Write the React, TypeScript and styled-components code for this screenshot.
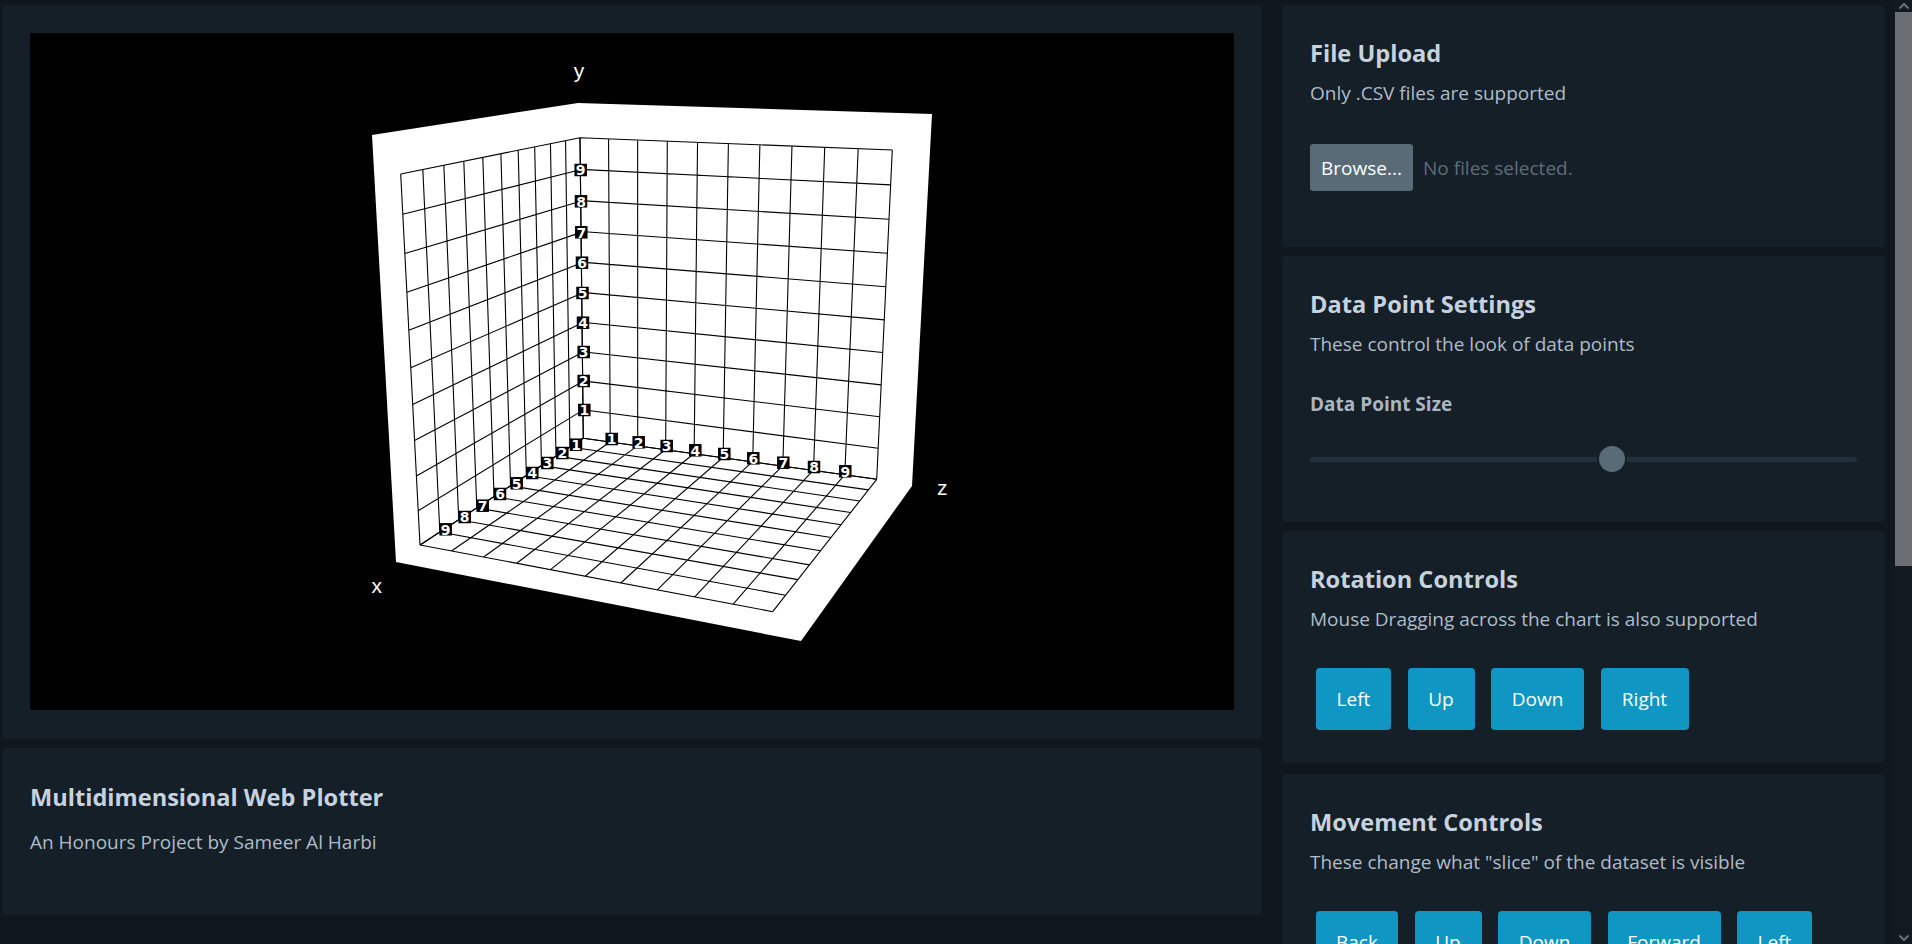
import React from 'react';
import styled, { createGlobalStyle } from 'styled-components';

type Pt = [number, number];

const GlobalStyle = createGlobalStyle`
  html, body {
    margin: 0;
    padding: 0;
    height: 100%;
    overflow: hidden;
    background: #10171d;
  }
`;

// maps the unit square on to a quad, so the grid keeps its perspective
const homography = (a: Pt, b: Pt, c: Pt, d: Pt) => {
  const dx1 = b[0] - c[0];
  const dx2 = d[0] - c[0];
  const sx = a[0] - b[0] + c[0] - d[0];
  const dy1 = b[1] - c[1];
  const dy2 = d[1] - c[1];
  const sy = a[1] - b[1] + c[1] - d[1];
  const det = dx1 * dy2 - dx2 * dy1;
  const g = (sx * dy2 - dx2 * sy) / det;
  const h = (dx1 * sy - sx * dy1) / det;
  return (u: number, v: number): Pt => {
    const w = g * u + h * v + 1;
    return [
      ((b[0] - a[0] + g * b[0]) * u + (d[0] - a[0] + h * d[0]) * v + a[0]) / w,
      ((b[1] - a[1] + g * b[1]) * u + (d[1] - a[1] + h * d[1]) * v + a[1]) / w,
    ];
  };
};

const gridPath = (a: Pt, b: Pt, c: Pt, d: Pt) => {
  const map = homography(a, b, c, d);
  let path = '';
  for (let i = 0; i <= 10; i++) {
    const [x1, y1] = map(i / 10, 0);
    const [x2, y2] = map(i / 10, 1);
    const [x3, y3] = map(0, i / 10);
    const [x4, y4] = map(1, i / 10);
    path += `M${x1} ${y1}L${x2} ${y2}M${x3} ${y3}L${x4} ${y4}`;
  }
  return path;
};

// chart coordinates are page coordinates minus the canvas origin (30, 33)
const at = (x: number, y: number): Pt => [x - 30, y - 33];

const corner = at(580, 137.7);
const floorBack = at(583.3, 438.3);
const leftTop = at(400.7, 174);
const leftBottom = at(420, 545);
const rightTop = at(892.3, 150);
const rightBottom = at(876.7, 479.3);
const floorFront = at(772.7, 611.7);

const WALLS = [
  gridPath(leftTop, corner, floorBack, leftBottom),
  gridPath(corner, rightTop, rightBottom, floorBack),
  gridPath(floorBack, rightBottom, floorFront, leftBottom),
];

const OUTLINE = [at(372, 135), at(578, 103), at(932, 114), at(912, 486), at(801, 641), at(396, 562)]
  .map((p) => p.join(','))
  .join(' ');

type Tick = { n: number; x: number; y: number };

const TICKS: Tick[] = [
  { n: 9, x: 580.7, y: 170 },
  { n: 8, x: 581, y: 201.3 },
  { n: 7, x: 581.3, y: 232.3 },
  { n: 6, x: 582, y: 262.7 },
  { n: 5, x: 582.5, y: 293 },
  { n: 4, x: 583, y: 322.7 },
  { n: 3, x: 583.7, y: 352 },
  { n: 2, x: 583.7, y: 381 },
  { n: 1, x: 584.3, y: 410 },
  { n: 1, x: 611.7, y: 439 },
  { n: 2, x: 638.7, y: 442.3 },
  { n: 3, x: 666.7, y: 446 },
  { n: 4, x: 695.3, y: 450.3 },
  { n: 5, x: 724.3, y: 454 },
  { n: 6, x: 753.3, y: 458.3 },
  { n: 7, x: 783.3, y: 462.7 },
  { n: 8, x: 814, y: 467 },
  { n: 9, x: 845.3, y: 471.3 },
  { n: 1, x: 576, y: 444.7 },
  { n: 2, x: 562.3, y: 453 },
  { n: 3, x: 547.3, y: 463 },
  { n: 4, x: 532.3, y: 473 },
  { n: 5, x: 516.7, y: 483.3 },
  { n: 6, x: 500, y: 494 },
  { n: 7, x: 482.7, y: 505.7 },
  { n: 8, x: 464.7, y: 517 },
  { n: 9, x: 445.7, y: 529.3 },
];

const AXES = [
  { name: 'y', x: 579, y: 72 },
  { name: 'z', x: 942.3, y: 489 },
  { name: 'x', x: 376.7, y: 587.3 },
];

const Chart = () => (
  <ChartSvg viewBox="0 0 1204 677">
    <polygon points={OUTLINE} fill="#fff" />
    {WALLS.map((d, i) => (
      <path key={i} d={d} fill="none" stroke="#000" strokeWidth="1.1" />
    ))}
    {TICKS.map((t, i) => {
      const [x, y] = at(t.x, t.y);
      return (
        <g key={i}>
          <rect x={x - 6.25} y={y - 6.25} width="12.5" height="12.5" fill="#000" />
          <TickText x={x} y={y + 5.2}>
            {t.n}
          </TickText>
        </g>
      );
    })}
    {AXES.map((a) => {
      const [x, y] = at(a.x, a.y);
      return (
        <AxisText key={a.name} x={x} y={y + 5.5}>
          {a.name}
        </AxisText>
      );
    })}
  </ChartSvg>
);

// the labels run narrower in the screenshot's font, so the widths are fixed per button
const ROTATION = [
  { label: 'Left', width: 75 },
  { label: 'Up', width: 67 },
  { label: 'Down', width: 93 },
  { label: 'Right', width: 88 },
];

const MOVEMENT = [
  { label: 'Back', width: 82 },
  { label: 'Up', width: 67 },
  { label: 'Down', width: 93 },
  { label: 'Forward', width: 113 },
  { label: 'Left', width: 75 },
  { label: 'Right', width: 88 },
];

const App = () => (
  <>
    <GlobalStyle />
    <S.Page>
      <S.Columns>
        <S.LeftColumn>
          <S.ChartCard>
            <S.Canvas>
              <Chart />
            </S.Canvas>
          </S.ChartCard>
          <S.TitleCard>
            <S.Title>Multidimensional Web Plotter</S.Title>
            <S.TitleSub>An Honours Project by Sameer Al Harbi</S.TitleSub>
          </S.TitleCard>
        </S.LeftColumn>
        <S.RightColumn>
          <S.Card $height={242}>
            <S.Heading>File Upload</S.Heading>
            <S.Sub>Only .CSV files are supported</S.Sub>
            <S.FileRow>
              <S.Browse>Browse...</S.Browse>
              <S.FileName>No files selected.</S.FileName>
            </S.FileRow>
          </S.Card>
          <S.Card $height={266}>
            <S.Heading>Data Point Settings</S.Heading>
            <S.Sub>These control the look of data points</S.Sub>
            <S.Label>Data Point Size</S.Label>
            <S.Track>
              <S.Thumb />
            </S.Track>
          </S.Card>
          <S.Card $height={232} $gap={11}>
            <S.Heading>Rotation Controls</S.Heading>
            <S.Sub>Mouse Dragging across the chart is also supported</S.Sub>
            <S.Buttons>
              {ROTATION.map((b) => (
                <S.Button key={b.label} $width={b.width}>
                  {b.label}
                </S.Button>
              ))}
            </S.Buttons>
          </S.Card>
          <S.Card $height={310}>
            <S.Heading>Movement Controls</S.Heading>
            <S.Sub>These change what "slice" of the dataset is visible</S.Sub>
            <S.Buttons>
              {MOVEMENT.map((b) => (
                <S.Button key={b.label} $width={b.width}>
                  {b.label}
                </S.Button>
              ))}
            </S.Buttons>
          </S.Card>
        </S.RightColumn>
      </S.Columns>
    </S.Page>
    <S.ScrollRail>
      <S.ScrollArrow viewBox="0 0 12 8">
        <path d="M1.5 6.5L6 2l4.5 4.5" />
      </S.ScrollArrow>
      <S.ScrollThumb />
      <S.ScrollSpacer />
      <S.ScrollArrow viewBox="0 0 12 8">
        <path d="M1.5 1.5L6 6l4.5-4.5" />
      </S.ScrollArrow>
    </S.ScrollRail>
  </>
);

export default App;

const FONT = `'Open Sans', 'Noto Sans', 'Liberation Sans', sans-serif`;

const ChartSvg = styled.svg`
  display: block;
  width: 100%;
  height: 100%;
`;

const TickText = styled.text`
  font-family: 'DejaVu Sans', sans-serif;
  font-size: 14px;
  font-weight: 700;
  text-anchor: middle;
  fill: #fff;
`;

const AxisText = styled.text`
  font-family: 'Liberation Sans', sans-serif;
  font-size: 21px;
  text-anchor: middle;
  fill: #fff;
`;

const S = {
  Page: styled.div`
    height: 100vh;
    overflow-y: scroll;
    scrollbar-width: none;
    background: #10171d;
    font-family: ${FONT};
  `,

  ScrollRail: styled.div`
    position: fixed;
    top: 0;
    right: 0;
    bottom: 0;
    width: 17px;
    display: flex;
    flex-direction: column;
    align-items: center;
    background: #121a20;
  `,

  ScrollArrow: styled.svg`
    flex: none;
    width: 12px;
    height: 8px;
    margin: 2px 0;
    fill: none;
    stroke: #6b6e73;
    stroke-width: 2;
  `,

  ScrollThumb: styled.div`
    flex: none;
    align-self: stretch;
    height: 554px;
    background: #6b6e73;
  `,

  ScrollSpacer: styled.div`
    flex: 1;
  `,

  Columns: styled.div`
    display: grid;
    grid-template-columns: 1260px 603px;
    column-gap: 20px;
    align-items: start;
    min-height: 1568px;
    padding: 5px 10px 0 2px;
    box-sizing: border-box;
  `,

  LeftColumn: styled.div`
    display: flex;
    flex-direction: column;
    gap: 9px;
  `,

  RightColumn: styled.div`
    display: flex;
    flex-direction: column;
  `,

  ChartCard: styled.section`
    background: #151f28;
    border-radius: 4px;
    padding: 28px;
    height: 734px;
    box-sizing: border-box;
  `,

  Canvas: styled.div`
    width: 1204px;
    height: 677px;
    background: #000;
  `,

  TitleCard: styled.section`
    background: #151f28;
    border-radius: 4px;
    padding: 33px 28px 0;
    height: 167px;
    box-sizing: border-box;
  `,

  Title: styled.h1`
    margin: 0;
    font-size: 23.6px;
    line-height: 32px;
    font-weight: 700;
    color: #c6d2dd;
  `,

  TitleSub: styled.p`
    margin: 16px 0 0;
    font-size: 19px;
    line-height: 26px;
    color: #aebcc8;
  `,

  Card: styled.section<{ $height: number; $gap?: number }>`
    background: #151f28;
    border-radius: 4px;
    padding: 32px 28px 0;
    margin-bottom: ${(p) => p.$gap ?? 9}px;
    height: ${(p) => p.$height}px;
    box-sizing: border-box;
  `,

  Heading: styled.h2`
    margin: 0;
    font-size: 23.6px;
    line-height: 32px;
    font-weight: 700;
    color: #c6d2dd;
  `,

  Sub: styled.p`
    margin: 11px 0 0;
    font-size: 19px;
    line-height: 26px;
    color: #aebcc8;
  `,

  FileRow: styled.div`
    display: flex;
    align-items: center;
    gap: 10px;
    margin-top: 38px;
  `,

  Browse: styled.button`
    width: 103px;
    height: 47px;
    padding: 0;
    border: 0;
    border-radius: 3px;
    background: #5a6b78;
    color: #fff;
    font: 19px ${FONT};
  `,

  FileName: styled.span`
    font-size: 19px;
    color: #5e6c76;
  `,

  Label: styled.div`
    margin-top: 34px;
    font-size: 19px;
    line-height: 26px;
    font-weight: 700;
    color: #a9b6c0;
  `,

  Track: styled.div`
    position: relative;
    height: 5px;
    margin-top: 40px;
    border-radius: 3px;
    background: #232f3a;
  `,

  Thumb: styled.div`
    position: absolute;
    left: 289px;
    top: -11px;
    width: 26px;
    height: 26px;
    border-radius: 50%;
    background: #5a6b78;
    box-shadow: 0 0 0 2px #151f28;
  `,

  Buttons: styled.div`
    display: flex;
    flex-wrap: wrap;
    gap: 16.5px;
    margin-top: 36px;
    padding-left: 6px;
  `,

  Button: styled.button<{ $width: number }>`
    width: ${(p) => p.$width}px;
    height: 62px;
    padding: 0;
    border: 0;
    border-radius: 4px;
    background: #0f96c2;
    color: #fff;
    font: 19px ${FONT};
  `,
};
